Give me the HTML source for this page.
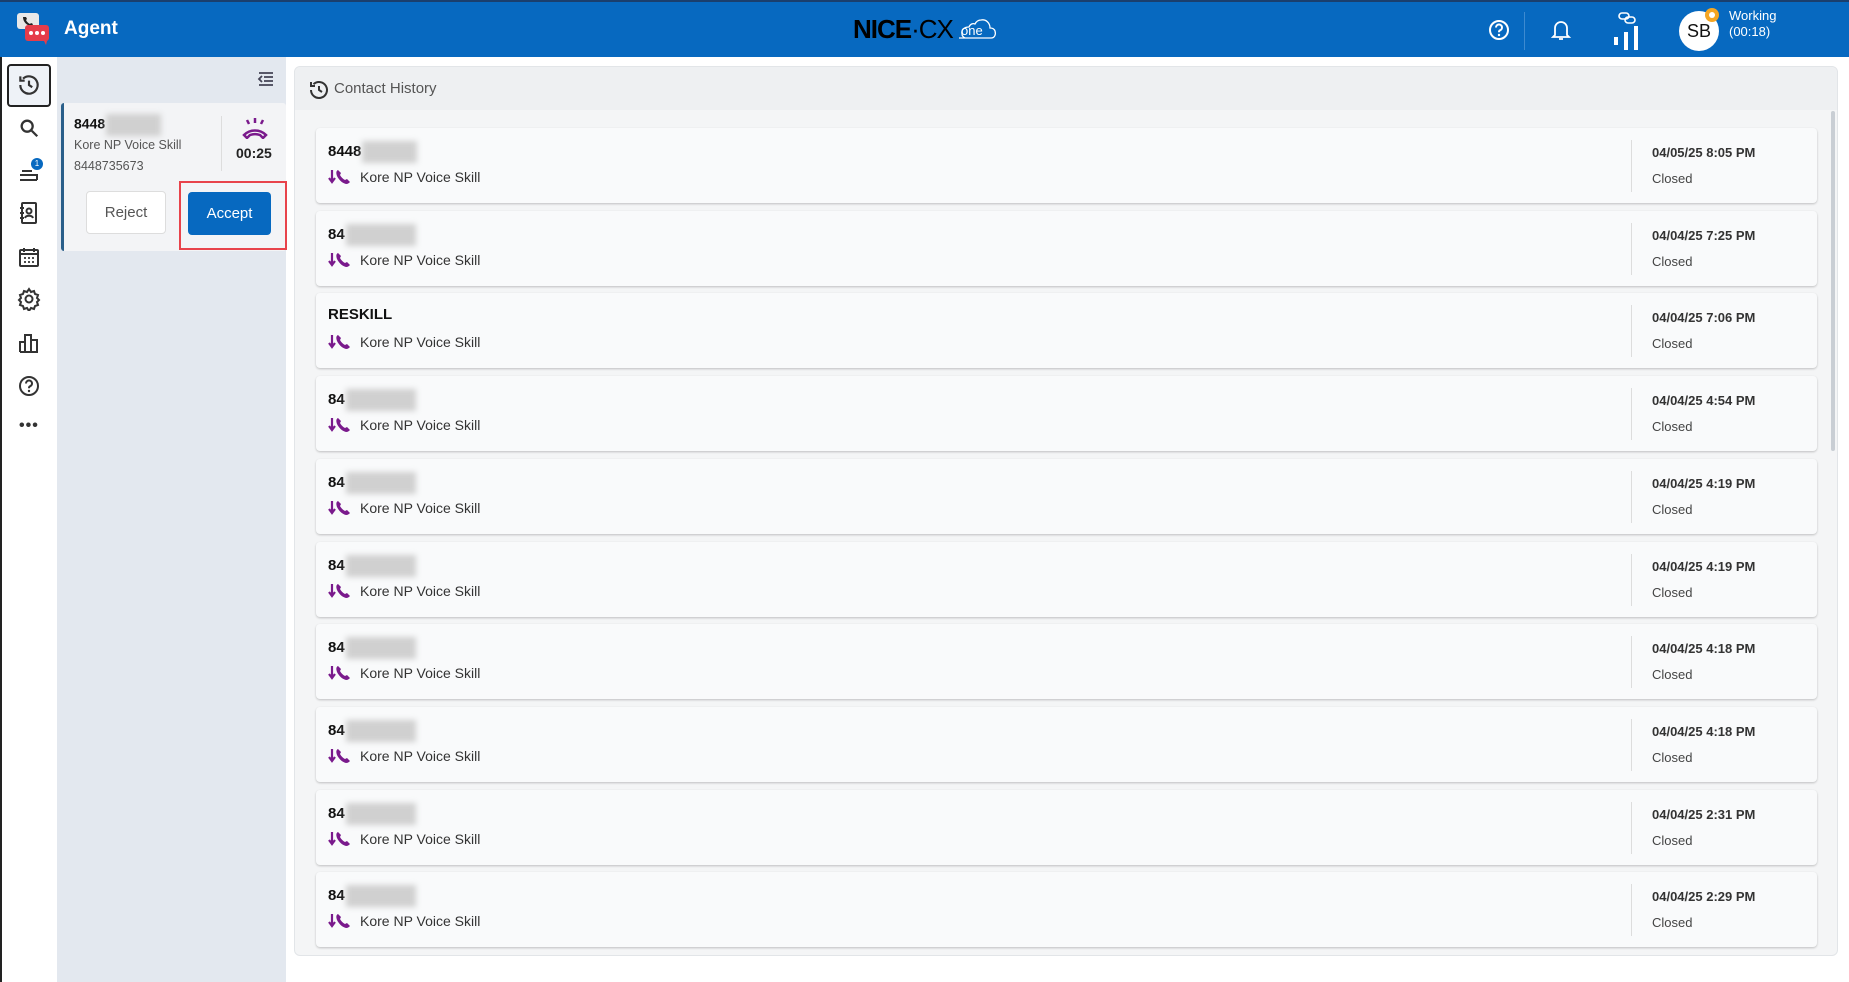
<!DOCTYPE html>
<html><head><meta charset="utf-8"><style>
*{box-sizing:border-box;margin:0;padding:0}
body{width:1849px;height:982px;overflow:hidden;background:#fff;font-family:"Liberation Sans",sans-serif;position:relative}
.hdr{position:absolute;left:0;top:0;width:1849px;height:57px;background:#0769c0;border-top:2px solid #1a3f6e}
.side{position:absolute;left:0;top:57px;width:57px;height:925px;background:#fff;border-left:2px solid #222}
.lp{position:absolute;left:57px;top:57px;width:229px;height:925px;background:#e3e8ef}
.main{position:absolute;left:294px;top:66px;width:1544px;height:890px;background:#f4f5f6;border:1px solid #e2e5e8;border-radius:6px}
.card{position:absolute;left:21px;width:1501px;height:75px;background:#f9fafb;border-radius:4px;box-shadow:0 1px 2px rgba(0,0,0,.22)}
.card .num{position:absolute;left:12px;top:13px;font-weight:bold;font-size:15px;color:#111}
.blur{display:inline-block;width:55px;height:22px;background:#d0d0d0;filter:blur(3px);vertical-align:middle;margin-left:1px}
.card .sk{position:absolute;left:12px;top:40px;font-size:14px;color:#333;display:flex;align-items:center}
.card .dv{position:absolute;left:1315px;top:12px;width:1px;height:52px;background:#ddd}
.card .dt{position:absolute;left:1336px;top:17px;font-weight:bold;font-size:13px;color:#333}
.card .cl{position:absolute;left:1336px;top:43px;font-size:13px;color:#444}
</style></head><body>
<div class="hdr">
 <svg style="position:absolute;left:16px;top:10px" width="36" height="36" viewBox="0 0 36 36"><rect x="1" y="1" width="22" height="16" rx="3" fill="#e8e8e8"/><path d="M7 5c0 5 4 9 9 9l1-2-2-1-1 1c-2-1-3-2-4-4l1-1-1-2z" fill="#222"/><rect x="9" y="13" width="24" height="16" rx="3" fill="#e53c4a"/><circle cx="15" cy="21" r="2" fill="#fff"/><circle cx="21" cy="21" r="2" fill="#fff"/><circle cx="27" cy="21" r="2" fill="#fff"/><path d="M28 29l2 4 1-4z" fill="#e53c4a"/></svg>
 <div style="position:absolute;left:64px;top:16px;color:#fff;font-size:19px;font-weight:bold">Agent</div>
 <div style="position:absolute;left:853px;top:12px;font-size:26px;font-weight:bold;color:#000;letter-spacing:-1px">NICE<span style="font-weight:normal">·CX</span></div>
 <svg style="position:absolute;left:955px;top:10px" width="42" height="30" viewBox="0 0 42 30"><path d="M4 26h32c4 0 5-4 4-7-1-3-4-3-5-3 0-5-4-9-9-8-3 0-5 2-6 4-2-1-5 0-6 3-5 0-8 3-7 7 0 2 1 3 3 4" fill="none" stroke="#fff" stroke-width="1.3"/><text x="6" y="23" font-size="13" fill="#fff" font-family="Liberation Sans">one</text></svg>
 <svg style="position:absolute;left:1488px;top:17px" width="22" height="22" viewBox="0 0 22 22"><circle cx="11" cy="11" r="9" fill="none" stroke="#fff" stroke-width="2"/><path d="M8 8.5a3 3 0 1 1 4 2.8c-1 .4-1 1-1 2" fill="none" stroke="#fff" stroke-width="2"/><circle cx="11" cy="16" r="1.2" fill="#fff"/></svg>
 <div style="position:absolute;left:1524px;top:10px;width:1px;height:38px;background:#3d8ad0"></div>
 <svg style="position:absolute;left:1550px;top:16px" width="22" height="24" viewBox="0 0 22 24"><path d="M5 17V10a6 6 0 0 1 12 0v7l2 2H3z M9 21h4" fill="none" stroke="#fff" stroke-width="1.8"/></svg>
 <svg style="position:absolute;left:1610px;top:8px" width="34" height="44" viewBox="0 0 34 44"><rect x="9" y="3" width="10" height="6" rx="3" fill="none" stroke="#fff" stroke-width="1.6"/><rect x="15" y="7" width="10" height="6" rx="3" fill="none" stroke="#fff" stroke-width="1.6"/><rect x="4" y="27" width="4" height="8" fill="#fff"/><rect x="14" y="22" width="4" height="18" fill="#fff"/><rect x="24" y="16" width="4" height="24" fill="#fff"/></svg>
 <div style="position:absolute;left:1679px;top:9px;width:40px;height:40px;border-radius:50%;background:#fff;color:#111;font-size:18px;text-align:center;line-height:40px">SB</div>
 <div style="position:absolute;left:1705px;top:6px;width:14px;height:14px;border-radius:50%;background:#f5a623;padding:4px"><div style="width:6px;height:6px;background:#fff;border-radius:50%"></div></div>
 <div style="position:absolute;left:1729px;top:6px;color:#fff;font-size:13px;line-height:16px">Working<br>(00:18)</div>
</div>
<div class="side">
 <div style="position:absolute;left:5px;top:7px;width:44px;height:43px;border:2px solid #222;border-radius:4px;background:#eef2f7"></div>
 <svg style="position:absolute;left:14px;top:15px" width="26" height="26" viewBox="0 0 24 24" fill="none" stroke="#333" stroke-width="2"><path d="M4 12a8 8 0 1 0 2.5-5.8M4 4v4h4M12 8v4l3 2"/></svg>
 <svg style="position:absolute;left:16px;top:60px" width="22" height="22" viewBox="0 0 24 24" fill="none" stroke="#333" stroke-width="2.5"><circle cx="10" cy="10" r="6"/><path d="M15 15l6 6"/></svg>
 <svg style="position:absolute;left:16px;top:103px" width="24" height="22" viewBox="0 0 24 22" fill="none" stroke="#333" stroke-width="2"><path d="M2 20h17M2 15h17v5M4 11h10"/></svg>
 <div style="position:absolute;left:29px;top:101px;width:12px;height:12px;border-radius:50%;background:#0769c0;color:#fff;font-size:8px;text-align:center;line-height:12px">1</div>
 <svg style="position:absolute;left:16px;top:144px" width="22" height="24" viewBox="0 0 22 24" fill="none" stroke="#333" stroke-width="2"><rect x="4" y="2" width="14" height="20" rx="1"/><circle cx="11" cy="10" r="2.5"/><path d="M7 17c1-3 7-3 8 0M2 7h4M2 12h4M2 17h4"/></svg>
 <svg style="position:absolute;left:16px;top:189px" width="22" height="22" viewBox="0 0 22 22" fill="none" stroke="#333" stroke-width="2"><rect x="2" y="4" width="18" height="16" rx="1"/><path d="M2 8h18M6 2v4M16 2v4"/><path d="M6 12h2M10 12h2M14 12h2M6 16h2M10 16h2M14 16h2" stroke-width="1.8"/></svg>
 <svg style="position:absolute;left:15px;top:230px" width="24" height="24" viewBox="0 0 24 24" fill="none" stroke="#333" stroke-width="2"><circle cx="12" cy="12" r="3.5"/><path d="M12 2l2 3 3-1 1 3 3 1-1 3 2 2-2 2 1 3-3 1-1 3-3-1-2 3-2-3-3 1-1-3-3-1 1-3-2-2 2-2-1-3 3-1 1-3 3 1z"/></svg>
 <svg style="position:absolute;left:16px;top:275px" width="22" height="22" viewBox="0 0 22 22" fill="none" stroke="#333" stroke-width="2"><path d="M2 20V10h5v10M7 20V3h6v17M13 20V8h6v12zM2 20h17"/></svg>
 <svg style="position:absolute;left:16px;top:318px" width="22" height="22" viewBox="0 0 22 22"><circle cx="11" cy="11" r="9" fill="none" stroke="#333" stroke-width="2"/><path d="M8 8.5a3 3 0 1 1 4 2.8c-1 .4-1 1-1 2" fill="none" stroke="#333" stroke-width="2"/><circle cx="11" cy="16" r="1.2" fill="#333"/></svg>
 <div style="position:absolute;left:17px;top:360px;font-size:16px;color:#333;letter-spacing:1px;font-weight:bold">•••</div>
</div>
<div class="lp">
 <svg style="position:absolute;left:200px;top:14px" width="18" height="16" viewBox="0 0 18 16" fill="none" stroke="#445" stroke-width="1.8"><path d="M2 2h14M7 6h9M7 10h9M2 14h14M5 5l-3 3 3 3"/></svg>
 <div style="position:absolute;left:4px;top:46px;width:225px;height:148px;background:#f3f4f6;border-left:3px solid #2a5f8a;border-radius:3px">
  <div style="position:absolute;left:10px;top:11px;font-size:14px;font-weight:bold;color:#111">8448<span class="blur" style="width:55px"></span></div>
  <div style="position:absolute;left:10px;top:35px;font-size:12.5px;color:#555">Kore NP Voice Skill</div>
  <div style="position:absolute;left:10px;top:56px;font-size:12.5px;color:#555">8448735673</div>
  <div style="position:absolute;left:157px;top:13px;width:1px;height:55px;background:#ddd"></div>
  <svg style="position:absolute;left:177px;top:14px" width="28" height="22" viewBox="0 0 28 22" fill="none" stroke="#7a1a8c" stroke-width="2.5"><path d="M14 1v5M6 3l2 4M22 3l-2 4M3 18c6-6 16-6 22 0l-3 3-3-3c-3-1-7-1-10 0l-3 3z" /></svg>
  <div style="position:absolute;left:172px;top:42px;font-size:14px;font-weight:bold;color:#222">00:25</div>
  <div style="position:absolute;left:22px;top:88px;width:80px;height:43px;background:#fff;border:1px solid #ddd;border-radius:4px;font-size:15px;color:#555;text-align:center;line-height:41px">Reject</div>
  <div style="position:absolute;left:124px;top:89px;width:83px;height:43px;background:#0769c0;border-radius:4px;font-size:15px;color:#fff;text-align:center;line-height:43px">Accept</div>
  <div style="position:absolute;left:115px;top:78px;width:108px;height:69px;border:2px solid #e8434b"></div>
 </div>
</div>
<div class="main">
 <div style="position:absolute;left:0;top:0;width:1542px;height:43px;background:#eef0f2;border-radius:6px 6px 0 0"></div>
 <svg style="position:absolute;left:12px;top:11px" width="24" height="24" viewBox="0 0 24 24" fill="none" stroke="#333" stroke-width="2"><path d="M4 12a8 8 0 1 0 2.5-5.8M4 4v4h4M12 8v4l3 2"/></svg>
 <div style="position:absolute;left:39px;top:13px;font-size:15px;color:#555">Contact History</div>
 <div style="position:absolute;left:1536px;top:44px;width:4px;height:340px;background:#c9ced4;border-radius:2px"></div>
 <div id="list"></div>
</div>
<script>
var tms=["04/05/25 8:05 PM","04/04/25 7:25 PM","04/04/25 7:06 PM","04/04/25 4:54 PM","04/04/25 4:19 PM","04/04/25 4:19 PM","04/04/25 4:18 PM","04/04/25 4:18 PM","04/04/25 2:31 PM","04/04/25 2:29 PM"];
var h="";
for(var i=0;i<10;i++){
 var ty=61+i*82.7;
 var n=i==0?'8448<span class="blur"></span>':(i==2?'RESKILL':'84<span class="blur" style="width:70px"></span>');
 h+='<div class="card" style="top:'+ty+'px"><div class="num">'+n+'</div><div class="sk"><svg width="26" height="18" viewBox="0 0 26 18"><path d="M4 2v12M1 10l3 4 3-4" fill="none" stroke="#7a1a8c" stroke-width="2.2"/><path d="M10 2c-2 1-2 3-1 6 2 4 5 7 9 8 2 0 3-1 4-2l-3-3-2 1c-2-1-4-3-5-5l1-2z" fill="#7a1a8c"/></svg><span style="margin-left:6px">Kore NP Voice Skill</span></div><div class="dv"></div><div class="dt">'+tms[i]+'</div><div class="cl">Closed</div></div>';
}
document.getElementById("list").innerHTML=h;
</script>
</body></html>
